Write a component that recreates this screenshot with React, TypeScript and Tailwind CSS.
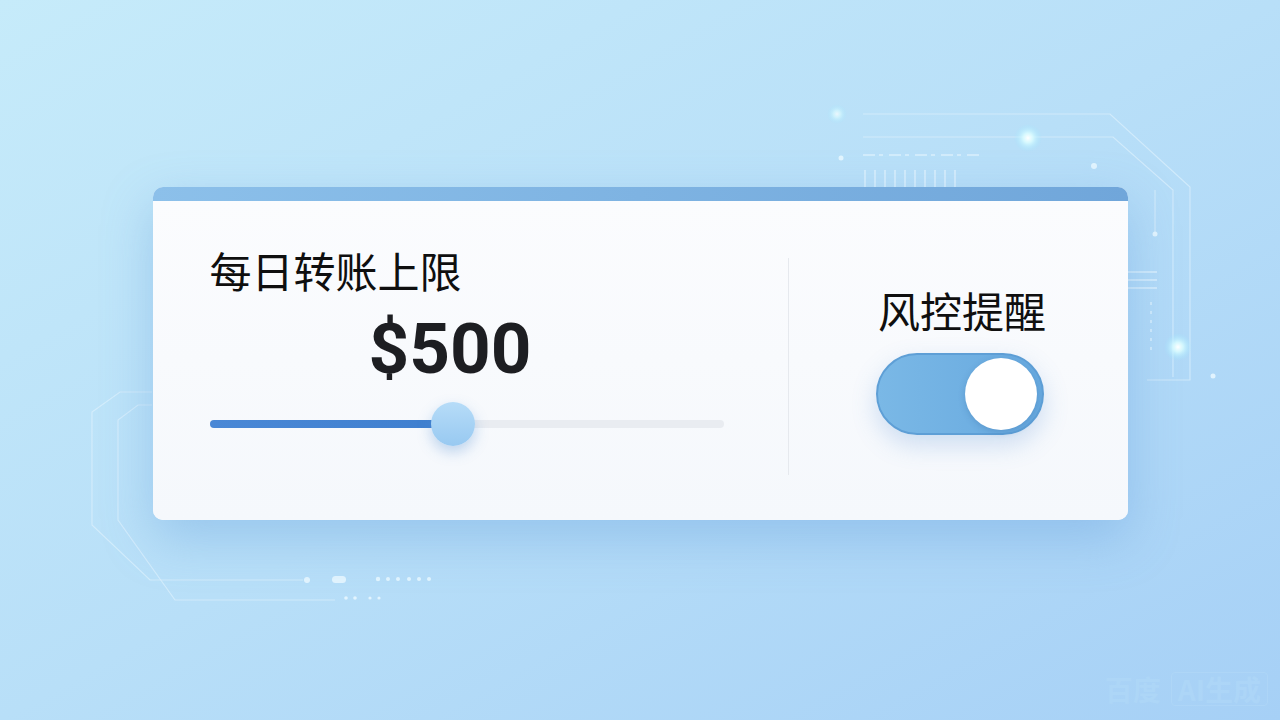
import React from 'react'

function Backdrop() {
  return (
    <svg className="absolute inset-0" width="1280" height="720" viewBox="0 0 1280 720" fill="none">
      <defs>
        <radialGradient id="glow">
          <stop offset="0" stopColor="#ffffff" stopOpacity="1" />
          <stop offset="0.35" stopColor="#d9fbff" stopOpacity="0.9" />
          <stop offset="1" stopColor="#9fe6ff" stopOpacity="0" />
        </radialGradient>
      </defs>
      <g stroke="#e3f4fd" strokeOpacity="0.6" strokeWidth="1.2">
        <path d="M863 114 H1110 L1190 187 V380 H1147" />
        <path d="M863 137 H1113 L1173 190 V377" />
        <path d="M1155 190 V234" />
        <path d="M1128 272 H1157 M1128 280 H1157 M1128 288 H1157" strokeWidth="2" />
        <path d="M1151 302 V350" strokeDasharray="3 6" strokeWidth="2" />
        <path d="M863 155 H983" strokeDasharray="12 4 4 6" strokeWidth="2" />
        <path d="M865 170 V187 M875 170 V187 M885 170 V187 M895 170 V187 M905 170 V187 M915 170 V187 M925 170 V187 M935 170 V187 M945 170 V187 M955 170 V187" strokeWidth="2" />
        <path d="M152 392 H120 L92 412 V525 L150 580 H303" />
        <path d="M152 405 H138 L118 420 V520 L175 600 H335" />
      </g>
      <g fill="#eaf8ff" fillOpacity="0.85">
        <circle cx="1155" cy="234" r="2.5" />
        <circle cx="841" cy="158" r="2.5" />
        <circle cx="1094" cy="166" r="3" />
        <circle cx="1213" cy="376" r="2.5" />
        <circle cx="307" cy="580" r="3" />
        <rect x="332" y="576" width="14" height="7" rx="3.5" />
        <circle cx="378" cy="579" r="2.2" />
        <circle cx="388" cy="579" r="2" />
        <circle cx="398" cy="579" r="2" />
        <circle cx="409" cy="579" r="2" />
        <circle cx="419" cy="579" r="2" />
        <circle cx="429" cy="579" r="2" />
        <circle cx="346" cy="598" r="1.8" />
        <circle cx="355" cy="598" r="1.8" />
        <circle cx="370" cy="598" r="1.6" />
        <circle cx="379" cy="598" r="1.6" />
      </g>
      <circle cx="837" cy="114" r="10" fill="url(#glow)" opacity="0.7" />
      <circle cx="1028" cy="138" r="14" fill="url(#glow)" />
      <circle cx="1178" cy="347" r="14" fill="url(#glow)" />
    </svg>
  )
}

export default function App() {
  return (
    <div className="relative w-[1280px] h-[720px] overflow-hidden bg-linear-to-br from-[#c6ebfa] via-[#b8dff8] to-[#a6d0f6]">
      <Backdrop />
      <div className="relative flex justify-center pt-[187px]">
        <div className="w-[975px] h-[333px] rounded-[10px] overflow-hidden bg-[#f8fafd] shadow-[0_18px_50px_rgba(90,150,215,0.35)] flex flex-col">
          <div className="h-[14px] bg-linear-to-r from-[#8cc0ea] to-[#70a6da]" />
          <div className="flex-1 flex bg-linear-to-b from-[#fbfcfe] to-[#f5f8fc]">
            <div className="w-[635px] pl-[57px] pt-[48px] flex flex-col">
              <div className="text-[42px] leading-[42px] text-[#0f0f0f] font-['Noto_Sans_CJK_SC',sans-serif]">
                每日转账上限
              </div>
              <div className="ml-[159px] mt-[22px] text-[71px] leading-[71px] font-bold text-[#1d1e22] font-['Roboto',sans-serif]">
                $500
              </div>
              <div className="relative mt-[36px] w-[514px] h-[8px] rounded-full bg-[#e9ecf1]">
                <div className="h-full w-[236px] rounded-full bg-linear-to-r from-[#4a88d6] to-[#3f7fcf]" />
                <div className="absolute left-[221px] top-[-18px] w-[44px] h-[44px] rounded-full bg-linear-to-b from-[#b6dcf8] to-[#98c9f1] shadow-[0_6px_14px_rgba(80,140,210,0.35)]" />
              </div>
            </div>
            <div className="w-px mt-[57px] h-[217px] bg-[#e6e9ee]" />
            <div className="flex-1 flex flex-col items-center pt-[88px]">
              <div className="text-[42px] leading-[42px] text-[#0f0f0f] font-['Noto_Sans_CJK_SC',sans-serif] ml-[8px]">
                风控提醒
              </div>
              <div className="mt-[22px] ml-[4px] w-[168px] h-[82px] rounded-full border-2 border-[#5e9fd6] bg-linear-to-r from-[#7ab8e6] to-[#67a9df] flex items-center justify-end pr-[5px] shadow-[0_10px_24px_rgba(80,140,210,0.25)]">
                <div className="w-[72px] h-[72px] rounded-full bg-white shadow-[0_2px_6px_rgba(40,90,150,0.25)]" />
              </div>
            </div>
          </div>
        </div>
      </div>
      <div className="absolute right-[12px] bottom-[14px] flex items-center gap-[10px] text-[28px] leading-[32px] font-bold text-[#b5dcf9] font-['Noto_Sans_CJK_SC',sans-serif] opacity-40">
        <span>百度</span>
        <span className="px-[6px] rounded-[4px] border border-[#b8ddf9]">AI生成</span>
      </div>
    </div>
  )
}
